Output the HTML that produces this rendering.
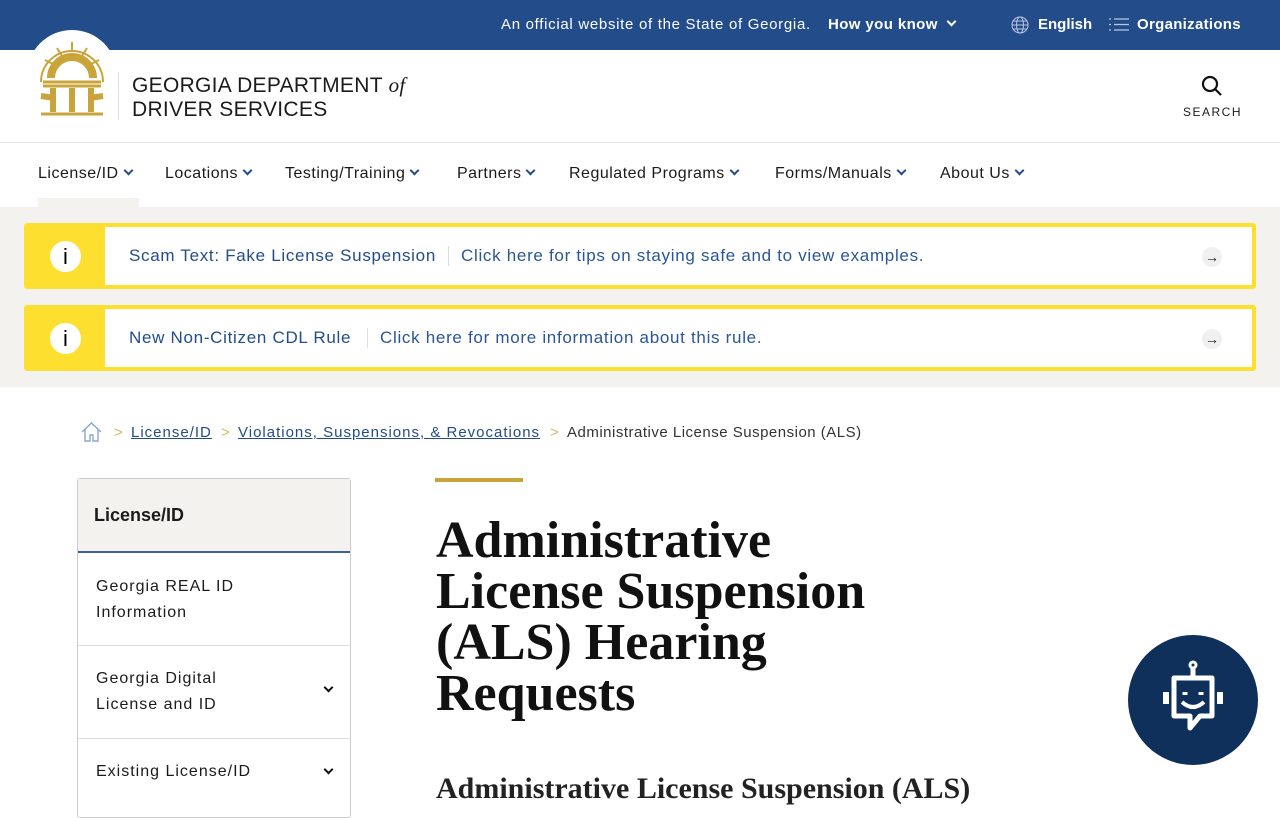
<!DOCTYPE html>
<html><head><meta charset="utf-8"><style>
*{box-sizing:border-box;margin:0;padding:0}
body{width:1280px;height:800px;overflow:hidden;font-family:"Liberation Sans",sans-serif;background:#fff;position:relative;color:#1b1b1b}
.top{position:absolute;left:0;top:0;width:1280px;height:50px;background:#234c8b;color:#fff;font-size:15px}
.top span{position:absolute;top:16px}
.hdr{position:absolute;top:50px;left:0;width:1280px;height:93px;border-bottom:1px solid #e5e5e5}
.logo{position:absolute;left:27px;top:30px;width:90px;height:90px;border-radius:50%;background:#fff}
.brand{position:absolute;left:132px;top:73px;font-size:21px;line-height:24px;color:#1b1b1b;letter-spacing:.3px}
.sep{position:absolute;left:118px;top:72px;width:1px;height:48px;background:#ddd}
.nav{position:absolute;top:143px;left:0;width:1280px;height:64px}
.nav span{position:absolute;top:22px;font-size:16px;color:#1b1b1b;letter-spacing:.5px}
.chev{display:inline-block;width:7px;height:7px;border-right:2px solid #234c8b;border-bottom:2px solid #234c8b;transform:rotate(45deg);margin-left:6px;position:relative;top:-4px}
.alerts{position:absolute;top:207px;left:0;width:1280px;height:180px;background:#f3f2ef}
.al{position:absolute;left:24px;width:1232px;height:66px;background:#fde02f;border-radius:3px}
.al .in{position:absolute;left:81px;top:4px;right:4px;bottom:4px;background:#fff}
.al .i{position:absolute;left:26px;top:18px;width:31px;height:31px;border-radius:50%;background:#fff;text-align:center;font-size:22px;line-height:31px;color:#000}
.al .t1{position:absolute;left:24px;top:19px;font-size:17px;color:#234c8b;letter-spacing:.7px}
.al .t2{position:absolute;top:19px;font-size:17px;color:#2a5596;letter-spacing:.7px;border-left:1px solid #ddd;padding-left:12px}
.al .arr{position:absolute;right:30px;top:20px;width:20px;height:20px;border-radius:50%;background:#f0f0f0;font-size:14px;text-align:center;line-height:20px}
.bc{position:absolute;top:424px;font-size:15px;color:#234c8b;letter-spacing:1px}
.side{position:absolute;left:77px;top:478px;width:274px;height:340px;border:1px solid #ccc;border-radius:3px}
.side .h{height:74px;background:#f3f2ef;border-bottom:2px solid #3e6197;font-weight:bold;font-size:18px;padding:26px 16px}
.side .it{border-bottom:1px solid #ddd;padding:0 18px;font-size:16px;line-height:26px;position:relative;letter-spacing:1px}
h1{position:absolute;left:436px;top:515px;font-family:"Liberation Serif",serif;font-size:52px;line-height:51px;font-weight:bold;color:#111;width:480px}
h2{position:absolute;left:436px;top:772px;font-family:"Liberation Serif",serif;font-size:30px;font-weight:bold;color:#222}
.bot{position:absolute;left:1128px;top:635px;width:130px;height:130px;border-radius:50%;background:#0e305a}
</style></head><body>
<div class="top">
<span style="left:501px;letter-spacing:.7px">An official website of the State of Georgia.</span>
<span style="left:828px;font-weight:bold;letter-spacing:.4px">How you know <i class="chev" style="border-color:#fff"></i></span>
<svg style="position:absolute;left:1011px;top:16px" width="18" height="18" viewBox="0 0 18 18" fill="none" stroke="#b8c6e0" stroke-width="1"><circle cx="9" cy="9" r="8"/><ellipse cx="9" cy="9" rx="3.5" ry="8"/><path d="M1 9h16M2.5 5h13M2.5 13h13"/></svg>
<span style="left:1038px;font-weight:bold">English</span>
<svg style="position:absolute;left:1109px;top:17px" width="20" height="15" viewBox="0 0 20 15" stroke="#b8c6e0" stroke-width="1.3"><path d="M0 2h2M5 2h15M0 7.5h2M5 7.5h15M0 13h2M5 13h15"/></svg>
<span style="left:1137px;font-weight:bold;letter-spacing:.3px">Organizations</span>
</div>
<div class="hdr"></div>
<div class="logo"><svg width="90" height="90" viewBox="0 0 90 90" fill="none" stroke="#c9a43a"><path d="M14 52 A31 31 0 1 1 76 52" stroke-width="2"/><path d="M24 48 A21 21 0 1 1 66 48" stroke-width="8"/><path d="M45 12v10M30 18l5 8M60 18l-5 8M18 30l8 4M72 30l-8 4" stroke-width="2"/><path d="M16 52h58M16 56h58" stroke-width="3"/><path d="M26 58v24M45 58v24M64 58v24" stroke-width="6"/><path d="M14 84h62" stroke-width="3"/><path d="M14 66l14 2M76 66l-14 2" stroke-width="6"/></svg></div>
<div class="sep"></div>
<div class="brand">GEORGIA DEPARTMENT <i style="font-family:'Liberation Serif',serif">of</i><br>DRIVER SERVICES</div>
<svg style="position:absolute;left:1201px;top:75px" width="22" height="22" viewBox="0 0 22 22" fill="none" stroke="#111" stroke-width="2.2"><circle cx="9" cy="9" r="7"/><path d="M14 14l6 6"/></svg>
<div style="position:absolute;left:1183px;top:105px;font-size:12px;letter-spacing:1.5px">SEARCH</div>
<div class="nav">
<span style="left:38px">License/ID<i class="chev"></i></span>
<div style="position:absolute;left:38px;top:55px;width:101px;height:9px;background:#f3f2ef"></div>
<span style="left:165px">Locations<i class="chev"></i></span>
<span style="left:285px">Testing/Training<i class="chev"></i></span>
<span style="left:457px">Partners<i class="chev"></i></span>
<span style="left:569px">Regulated Programs<i class="chev"></i></span>
<span style="left:775px">Forms/Manuals<i class="chev"></i></span>
<span style="left:940px">About Us<i class="chev"></i></span>
</div>
<div class="alerts">
<div class="al" style="top:16px"><div class="i">i</div><div class="in"><span class="t1">Scam Text: Fake License Suspension</span><span class="t2" style="left:343px">Click here for tips on staying safe and to view examples.</span><div class="arr">→</div></div></div>
<div class="al" style="top:98px"><div class="i">i</div><div class="in"><span class="t1">New Non-Citizen CDL Rule</span><span class="t2" style="left:262px">Click here for more information about this rule.</span><div class="arr">→</div></div></div>
</div>
<svg style="position:absolute;left:81px;top:422px" width="21" height="20" viewBox="0 0 21 20" fill="none" stroke="#8aa6cf" stroke-width="1.4"><path d="M1 10L10.5 1 20 10M4 7v12h5v-6h3v6h5V7"/></svg>
<span class="bc" style="left:114px;color:#d8b860">&gt;</span>
<span class="bc" style="left:131px;text-decoration:underline">License/ID</span>
<span class="bc" style="left:221px;color:#d8b860">&gt;</span>
<span class="bc" style="left:238px;text-decoration:underline">Violations, Suspensions, &amp; Revocations</span>
<span class="bc" style="left:550px;color:#d8b860">&gt;</span>
<span class="bc" style="left:567px;color:#333;letter-spacing:.5px">Administrative License Suspension (ALS)</span>
<div class="side">
<div class="h">License/ID</div>
<div class="it" style="height:93px;padding-top:21px">Georgia REAL ID<br>Information</div>
<div class="it" style="height:93px;padding-top:20px">Georgia Digital<br>License and ID<i class="chev" style="position:absolute;right:18px;top:38px;border-color:#111"></i></div>
<div class="it" style="height:70px;padding-top:20px;border:0">Existing License/ID<i class="chev" style="position:absolute;right:18px;top:27px;border-color:#111"></i></div>
</div>
<div style="position:absolute;left:435px;top:478px;width:88px;height:4px;background:#c9a43a"></div>
<h1>Administrative License Suspension (ALS) Hearing Requests</h1>
<h2>Administrative License Suspension (ALS)</h2>
<div class="bot"><svg style="position:absolute;left:32px;top:25px" width="66" height="78" viewBox="0 0 66 78" fill="none" stroke="#fff" stroke-width="5"><circle cx="33" cy="5" r="3" stroke-width="3"/><path d="M33 8v8"/><path d="M14 18h38v38H40l-10 12V56H14z" stroke-linejoin="round"/><path d="M6 32v12M60 32v12" stroke-width="6"/><path d="M25 32v3M41 32v3"/><path d="M22 42q11 10 22 0" stroke-width="4"/></svg></div>
</body></html>
